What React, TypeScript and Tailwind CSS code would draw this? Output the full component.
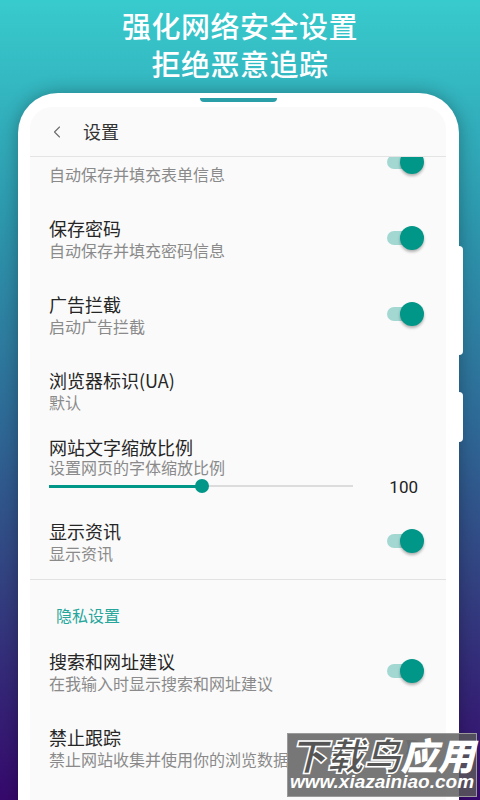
import { ChevronLeft } from "lucide-react";

const cjk = { fontFamily: '"Noto Sans CJK SC", "Noto Sans", sans-serif' };

function Toggle({ on = true }: { on?: boolean }) {
  return (
    <div className="relative w-[40px] h-[24px] flex items-center shrink-0">
      <div className={`ml-[3px] w-[34px] h-[14px] rounded-full ${on ? "bg-[#a3d8d2]" : "bg-[#c4c4c4]"}`} />
      <div
        className={`absolute top-0 w-[24px] h-[24px] rounded-full shadow-[0_2px_3px_rgba(0,0,0,0.3)] ${
          on ? "right-0 bg-[#009688]" : "left-0 bg-[#f1f1f1]"
        }`}
      />
    </div>
  );
}

function Row({ title, sub, on, className = "" }: { title: string; sub: string; on?: boolean; className?: string }) {
  return (
    <div className={`flex items-center justify-between pl-[19px] pr-[22px] py-4 ${className}`}>
      <div>
        <div className="text-[18px] leading-6 text-[#262626]">{title}</div>
        <div className="text-[16px] leading-5 text-[#8a8a8a]">{sub}</div>
      </div>
      {on !== undefined && <Toggle on={on} />}
    </div>
  );
}

export default function App() {
  return (
    <div
      className="relative w-[480px] h-[800px] overflow-hidden bg-[linear-gradient(180deg,#38cbcd_0%,#2d97ad_28%,#2e6b97_52%,#333f80_74%,#36096d_100%)]"
      style={cjk}
    >
      <div className="pt-[6px] text-center text-white text-[29px] leading-[38px] font-medium tracking-[0.5px]">
        <div>强化网络安全设置</div>
        <div>拒绝恶意追踪</div>
      </div>

      <div className="relative mt-[11px] ml-[18px] w-[441px] h-[720px] bg-white rounded-t-[40px] pt-[5px] px-[12px] shadow-[0_0_18px_rgba(0,0,0,0.3)]">
        <div className="mx-auto w-[77px] h-[4px] rounded-b-full bg-[#2a9fa8]" />
        <div className="absolute -right-[4px] top-[153px] w-[4px] h-[109px] bg-white rounded-r-sm" />
        <div className="absolute -right-[4px] top-[299px] w-[4px] h-[50px] bg-white rounded-r-sm" />

        <div className="mt-[5px] w-[416px] h-[700px] bg-[#fafafa] rounded-t-[22px] overflow-hidden">
          <div className="h-[50px] flex items-center border-b border-[#e4e4e4]">
            <ChevronLeft className="ml-[17px] w-[20px] h-[20px] text-[#6b6b6b]" strokeWidth={1.3} />
            <span className="ml-[16px] text-[18px] text-[#333]">设置</span>
          </div>

          <div className="overflow-hidden">
            {/* list is scrolled: only the bottom of the first item shows */}
            <div className="flex items-start justify-between pl-[19px] pr-[22px]">
              <div className="pt-[7px] pb-4 text-[16px] leading-5 text-[#8a8a8a]">自动保存并填充表单信息</div>
              <div className="-mt-[7px]">
                <Toggle />
              </div>
            </div>
            <Row title="保存密码" sub="自动保存并填充密码信息" on />
            <Row title="广告拦截" sub="启动广告拦截" on />
            <Row className="pb-[17px]" title="浏览器标识(UA)" sub="默认" />

            <div className="pl-[19px] pr-[28px] pt-[6px] pb-[8px]">
              <div className="text-[18px] leading-6 text-[#262626]">网站文字缩放比例</div>
              <div className="-mt-[2px] text-[16px] leading-5 text-[#8a8a8a]">设置网页的字体缩放比例</div>
              <div className="h-[18px] flex items-center">
                <div className="relative w-[304px] h-[2px] bg-[#dcdcdc]">
                  <div className="absolute left-0 -top-[0.5px] w-[153px] h-[3px] bg-[#009688]" />
                  <div className="absolute left-[146px] -top-[6px] w-[14px] h-[14px] rounded-full bg-[#009688]" />
                </div>
                <span
                  className="ml-auto mt-[4px] text-[17px] text-[#222]"
                  style={{ fontFamily: "Roboto, sans-serif" }}
                >
                  100
                </span>
              </div>
            </div>

            <Row title="显示资讯" sub="显示资讯" on />
            <div className="border-t border-[#e2e2e2]" />
            <div className="pl-[26px] pt-6 pb-[7px] text-[16px] leading-[22px] text-[#26a69a]">隐私设置</div>
            <Row title="搜索和网址建议" sub="在我输入时显示搜索和网址建议" on />
            <Row title="禁止跟踪" sub="禁止网站收集并使用你的浏览数据" on={false} />
          </div>
        </div>
      </div>

      <div className="absolute left-[287px] top-[733px] w-[190px] h-[64px] bg-[rgba(90,90,90,0.82)] border border-[#9a9a9a] flex flex-col items-center">
        <div className="leading-[40px] text-[37px] font-black italic whitespace-nowrap">
          <span className="text-[#555] [-webkit-text-stroke:1.5px_#fff]">下载鸟</span>
          <span className="text-white">应用</span>
        </div>
        <div
          className="-mt-[3px] text-[19px] leading-[22px] font-bold italic text-white whitespace-nowrap"
          style={{ fontFamily: '"Liberation Sans", sans-serif' }}
        >
          www.xiazainiao.com
        </div>
      </div>
    </div>
  );
}
